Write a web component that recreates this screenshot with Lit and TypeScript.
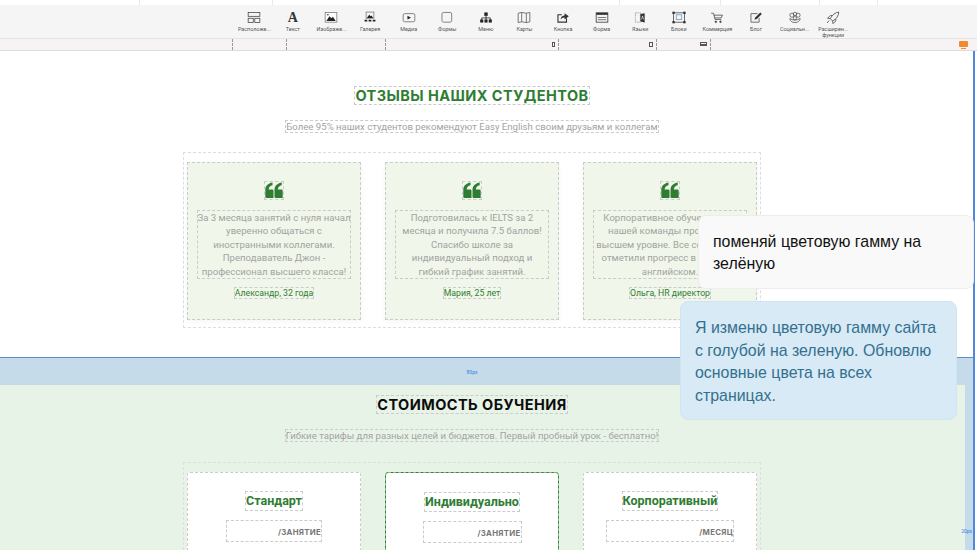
import { LitElement, html, css, svg } from 'lit';
import { customElement } from 'lit/decorators.js';

const stroke = (body: unknown) => html`<svg class="ico" viewBox="0 0 18 16" fill="none" stroke="#444" stroke-width="1">${body}</svg>`;

// toolbar entries, left to right
const TOOLS: { label: string; icon: unknown }[] = [
  { label: 'Расположе...', icon: stroke(svg`<rect x="1.5" y="1.5" width="15" height="5"/><rect x="1.5" y="9" width="6.5" height="5.5"/><rect x="10" y="9" width="6.5" height="5.5"/>`) },
  { label: 'Текст', icon: html`<span class="glyph">A</span>` },
  { label: 'Изображе...', icon: stroke(svg`<rect x="1.5" y="1.5" width="15" height="12.5" stroke="#777" fill="#fff"/><path d="M3 12.5 L7 6.5 L9.5 9 L11.5 7 L15 12.5Z" fill="#222" stroke="none"/><circle cx="5" cy="4.5" r="1" fill="#222" stroke="none"/>`) },
  { label: 'Галерея', icon: stroke(svg`<rect x="4" y="1" width="10" height="8" stroke="#777"/><path d="M5 8.5 L8 4.5 L10 6.5 L11 5.5 L13 8.5Z" fill="#222" stroke="none"/><path d="M2 12h3.5M7.2 12h3.5M12.5 12h3.5" stroke="#222" stroke-width="2"/>`) },
  { label: 'Медиа', icon: stroke(svg`<rect x="1.5" y="3" width="15" height="10.5" rx="2" stroke="#666"/><path d="M7 5.8 L11.5 8.2 L7 10.7Z" fill="#222" stroke="none"/>`) },
  { label: 'Формы', icon: stroke(svg`<rect x="2.5" y="1.5" width="12.5" height="12.5" rx="2" stroke="#666"/>`) },
  { label: 'Меню', icon: stroke(svg`<path d="M9 6v3M3.5 11V8.5h11V11M9 8.5V11" stroke="#222"/><rect x="6.8" y="1.5" width="4.4" height="4.4" fill="#222" stroke="none"/><rect x="1.5" y="10.5" width="4" height="4" fill="#222" stroke="none"/><rect x="7" y="10.5" width="4" height="4" fill="#222" stroke="none"/><rect x="12.5" y="10.5" width="4" height="4" fill="#222" stroke="none"/>`) },
  { label: 'Карты', icon: stroke(svg`<path d="M1.5 2.5 L6 1.5 L12 2.5 L16.5 1.5 V13.5 L12 14.5 L6 13.5 L1.5 14.5Z M6 1.5V13.5 M12 2.5V14.5" stroke="#555"/>`) },
  { label: 'Кнопка', icon: stroke(svg`<path d="M13.5 9v5H2.5V4.5h5" stroke="#333" stroke-width="1.4"/><path d="M6 11 C6 7 8.5 5.5 11 5.5V2.5L16.5 6.5 L11 10.5V8 C9 8 7 9 6 11Z" fill="#333" stroke="none"/>`) },
  { label: 'Форма', icon: stroke(svg`<rect x="1.5" y="2" width="15" height="12" stroke="#333"/><rect x="1.5" y="2" width="15" height="2.6" fill="#333" stroke="none"/><path d="M3.5 8h11M3.5 10.8h11" stroke="#555"/>`) },
  { label: 'Языки', icon: stroke(svg`<rect x="3" y="2" width="6.5" height="12" stroke="#a89" stroke-dasharray="2 1"/><path d="M9.5 3.5 L15 2.5 V14.5 L9.5 13Z" fill="#333" stroke="none"/><path d="M11 10.5 L12.3 6 L13.6 10.5" stroke="#fff" stroke-width=".8"/>`) },
  { label: 'Блоки', icon: stroke(svg`<rect x="2" y="2" width="14" height="12" stroke="#444"/><rect x="5.5" y="4.5" width="7" height="6" stroke="#69b"/><g fill="#333" stroke="none"><rect x="0.5" y="0.5" width="3" height="3"/><rect x="14.5" y="0.5" width="3" height="3"/><rect x="0.5" y="12.5" width="3" height="3"/><rect x="14.5" y="12.5" width="3" height="3"/></g>`) },
  { label: 'Коммерция', icon: stroke(svg`<path d="M1.5 2.5h3l2 8h8M5 5h11l-1.5 3.5H6" stroke="#444"/><circle cx="7.5" cy="13.5" r="1" fill="#333"/><circle cx="13.5" cy="13.5" r="1" fill="#333"/>`) },
  { label: 'Блог', icon: stroke(svg`<path d="M13 8.5V14H2.5V3H11" stroke="#666" stroke-width="1.2"/><path d="M7 11 L8 8 L14.5 1.5 L16.5 3.5 L10 10Z" fill="#333" stroke="none"/>`) },
  { label: 'Социальн...', icon: stroke(svg`<circle cx="5" cy="5" r="2.6" stroke="#555"/><circle cx="13" cy="5" r="2.6" stroke="#555"/><circle cx="9" cy="3.5" r="2.2" stroke="#555"/><path d="M2.5 9 C2 12 5 14.5 9 14.5 C13 14.5 16 12 15.5 9 C13 12 5 12 2.5 9Z" stroke="#555"/><circle cx="9" cy="9" r="2.2" stroke="#555"/>`) },
  { label: 'Расширен... функции', icon: stroke(svg`<path d="M16.5 1 C12 1.5 8 4.5 5.5 9.5 L8.5 12.5 C13.5 10 16 6 16.5 1Z M5.5 9.5 L2 9 L5.5 5.5 H8 M8.5 12.5 L9 16 L12.5 12.5 V10 M4 12 L1.5 15" stroke="#444"/>`) },
];

const TESTIMONIALS = [
  { text: 'За 3 месяца занятий с нуля начал уверенно общаться с иностранными коллегами. Преподаватель Джон - профессионал высшего класса!', who: 'Александр, 32 года' },
  { text: 'Подготовилась к IELTS за 2 месяца и получила 7.5 баллов! Спасибо школе за индивидуальный подход и гибкий\u00a0график занятий.', who: 'Мария, 25 лет' },
  { text: 'Корпоративное обучение для нашей команды прошло на высшем уровне. Все сотрудники отметили прогресс в деловом английском.', who: 'Ольга, HR директор' },
];

const PLANS = [
  { name: 'Стандарт', unit: '/занятие', priceClass: 'w96' },
  { name: 'Индивидуально', unit: '/занятие', priceClass: 'w99', featured: true },
  { name: 'Корпоративный', unit: '/месяц', priceClass: 'w128' },
];

@customElement('app-root')
export class AppRoot extends LitElement {
  static override styles = css`
    :host {
      display: block;
      position: relative;
      width: 977px;
      height: 550px;
      overflow: hidden;
      background: #fff;
      font-family: Roboto, sans-serif;
    }

    /* ── Editor chrome ── */
    .strip {
      display: flex;
      height: 5px;
      padding-left: 139px;
    }
    .strip span {
      border-left: 1px solid #e8e8e8;
    }
    .toolbar {
      display: flex;
      height: 33px;
      padding-left: 235px;
      background: #f5f5f5;
    }
    .tool {
      display: flex;
      flex-direction: column;
      align-items: center;
      width: 38.6px;
      flex: none;
      padding-top: 6px;
      box-sizing: border-box;
    }
    .ico {
      display: block;
      width: 14px;
      height: 13px;
    }
    .glyph {
      display: block;
      height: 13px;
      font: 700 14px/13px 'Liberation Serif', serif;
      color: #333;
    }
    .tool label {
      display: block;
      margin-top: 2px;
      width: 40px;
      flex: none;
      text-align: center;
      font-size: 5.4px;
      line-height: 6px;
      color: #555;
    }
    .ruler {
      display: flex;
      height: 13px;
      box-sizing: border-box;
      padding-left: 232px;
      background: #f7f3f5;
      border-top: 1px solid #e4e4e4;
      border-bottom: 1px solid #ddd;
    }
    .ruler div {
      position: relative;
      border-left: 1px dashed #999;
      box-sizing: border-box;
    }
    .device {
      position: absolute;
      top: 3px;
      right: 3px;
      width: 3px;
      height: 5px;
      border: 1px solid #555;
      box-sizing: border-box;
    }
    .device.tablet { width: 4px; }
    .device.laptop {
      width: 7px;
      height: 4px;
      border-bottom: 2px solid #555;
    }
    .monitor {
      position: absolute;
      top: 2px;
      right: 3px;
      width: 9px;
      height: 6px;
      background: #f08c28;
      border-radius: 1px;
    }
    .monitor::after {
      content: '';
      position: absolute;
      left: 2px;
      right: 2px;
      bottom: -2px;
      height: 1px;
      background: #f08c28;
    }

    /* ── Page ── */
    .page {
      width: 975px;
      border-right: 2px solid #4f86e0;
      box-sizing: border-box;
    }
    .head {
      display: flex;
      flex-direction: column;
      align-items: center;
      width: 944px;
    }
    .reviews {
      height: 306px;
      padding-top: 35px;
      box-sizing: border-box;
    }
    .gap {
      height: 27px;
      width: 944px;
      display: flex;
      align-items: center;
      justify-content: center;
      font-size: 5px;
      color: #3b7de0;
    }
    .gap-row {
      background: #c5dbe9;
      border-top: 1px solid #5c8bd0;
    }
    .pricing-wrap {
      display: flex;
      background: #c5dbe9;
      height: 165px;
    }
    .pricing {
      position: relative;
      width: 965px;
      padding-top: 10px;
      box-sizing: border-box;
      background: #e8f3e8;
    }
    .side-label {
      position: absolute;
      top: 143px;
      right: -7px;
      font-size: 5px;
      color: #3b7de0;
    }
    .dash { border: 1px dashed #cbcbcb; }
    h2 {
      margin: 0;
      font: 700 14.5px/17px Inter, sans-serif;
      letter-spacing: 0.45px;
      color: #2e7d32;
    }
    .pricing h2 { color: #0c0c0c; }
    .sub {
      margin: 15px 0 0;
      font-size: 9.6px;
      line-height: 11px;
      color: #a3a3a3;
    }
    .grid {
      display: grid;
      grid-template-columns: repeat(3, 174px);
      gap: 24px;
      width: 578px;
      margin: 19px 0 0 183px;
      padding: 9px 3px 7px;
      box-sizing: border-box;
      border-color: #dedede;
    }
    .quote-card {
      height: 158px;
      padding-top: 18px;
      box-sizing: border-box;
      display: flex;
      flex-direction: column;
      align-items: center;
      background: #f0f6e9;
      box-shadow: 0 2px 6px rgba(0, 0, 0, 0.04);
    }
    .quote {
      display: block;
      width: 18px;
      height: 17px;
    }
    .quote-text {
      width: 154px;
      box-sizing: border-box;
      margin: 10px 0 0;
      font-size: 9.6px;
      line-height: 13.4px;
      text-align: center;
      color: #a3a3a3;
    }
    /* the longest line runs a little past the dashed box */
    .quote-text span {
      display: block;
      margin: 0 -1.5px;
    }
    .who {
      margin-top: 8px;
      font-size: 8.7px;
      line-height: 10px;
      color: #2e7d32;
    }
    .grid.plans {
      margin-top: 20px;
    }
    .plan {
      height: 90px;
      padding-top: 18px;
      box-sizing: border-box;
      display: flex;
      flex-direction: column;
      align-items: center;
      background: #fff;
      border-radius: 3px;
    }
    .plan.featured {
      padding-top: 19px;
      border: 1px solid #2e7d32;
      outline: 1px dashed rgba(255, 255, 255, 0.45);
      outline-offset: -1px;
    }
    .plan h3 {
      margin: 0;
      font: 700 12.5px/18px Roboto, sans-serif;
      color: #2e7d32;
    }
    .price {
      margin-top: 9px;
      height: 22px;
      box-sizing: border-box;
      font: 700 7.8px/23px Inter, sans-serif;
      letter-spacing: 0.3px;
      text-align: right;
      text-transform: uppercase;
      color: #777;
    }
    .w96 { width: 96px; }
    .w99 { width: 99px; }
    .w128 { width: 128px; }

    /* ── Chat bubbles floating over the page ── */
    .bubble {
      position: absolute;
      box-sizing: border-box;
      font-family: 'Liberation Sans', Arial, sans-serif;
      font-size: 15.9px;
      border-radius: 8px;
    }
    .user {
      left: 698px;
      top: 215px;
      width: 276px;
      height: 74px;
      padding: 15px 14px;
      line-height: 22px;
      color: #111;
      background: #f9f9f9;
      border: 1px solid #ededed;
    }
    .bot {
      left: 680px;
      top: 301px;
      width: 277px;
      height: 119px;
      padding: 15px 14px;
      line-height: 22.5px;
      color: #34708f;
      background: #d7eaf5;
      border: 1px solid #cfe5f3;
    }
  `;

  override render() {
    return html`
      <div class="strip">
        <span style="width:132px"></span><span style="width:346px"></span><span style="width:100px"></span><span style="width:98px"></span><span style="width:57px"></span><span></span>
      </div>
      <div class="toolbar">
        ${TOOLS.map((t) => html`<div class="tool">${t.icon}<label>${t.label}</label></div>`)}
      </div>
      <div class="ruler">
        <div style="width:54px"></div>
        <div style="width:99px"></div>
        <div style="width:173px"><i class="device"></i></div>
        <div style="width:98px"><i class="device tablet"></i></div>
        <div style="width:54px"><i class="device laptop"></i></div>
        <div style="width:261px"><i class="monitor"></i></div>
      </div>
      <div class="page">
        <section class="reviews">
          <div class="head">
            <h2 class="dash">ОТЗЫВЫ НАШИХ СТУДЕНТОВ</h2>
            <p class="sub dash">Более 95% наших студентов рекомендуют Easy English своим друзьям и коллегам</p>
          </div>
          <div class="grid dash">
            ${TESTIMONIALS.map(
              (t) => html`
                <div class="quote-card dash">
                  <span class="dash">
                    <svg class="quote" viewBox="0 0 18 17" fill="#2e7d32">
                      <path d="M8.5 16H1.5A1.2 1.2 0 0 1 .3 14.8V8C.3 4 3 1.2 7.5.5V3.2C5 3.8 3.8 5.2 3.6 7.5H7.3A1.2 1.2 0 0 1 8.5 8.7Z" />
                      <path d="M17.7 16H10.7A1.2 1.2 0 0 1 9.5 14.8V8C9.5 4 12.2 1.2 16.7.5V3.2C14.2 3.8 13 5.2 12.8 7.5H16.5A1.2 1.2 0 0 1 17.7 8.7Z" />
                    </svg>
                  </span>
                  <p class="quote-text dash"><span>${t.text}</span></p>
                  <span class="who dash">${t.who}</span>
                </div>
              `,
            )}
          </div>
        </section>
        <div class="gap-row"><div class="gap">80px</div></div>
        <div class="pricing-wrap">
          <section class="pricing">
            <div class="head">
              <h2 class="dash">СТОИМОСТЬ ОБУЧЕНИЯ</h2>
              <p class="sub dash">Гибкие тарифы для разных целей и бюджетов. Первый пробный урок - бесплатно!</p>
            </div>
            <div class="grid plans dash">
              ${PLANS.map(
                (p) => html`
                  <div class="plan dash ${p.featured ? 'featured' : ''}">
                    <h3 class="dash">${p.name}</h3>
                    <div class="price dash ${p.priceClass}">${p.unit}</div>
                  </div>
                `,
              )}
            </div>
            <span class="side-label">20px</span>
          </section>
        </div>
      </div>
      <div class="bubble user">поменяй цветовую гамму на зелёную</div>
      <div class="bubble bot">Я изменю цветовую гамму сайта с голубой на зеленую. Обновлю основные цвета на всех страницах.</div>
    `;
  }
}
